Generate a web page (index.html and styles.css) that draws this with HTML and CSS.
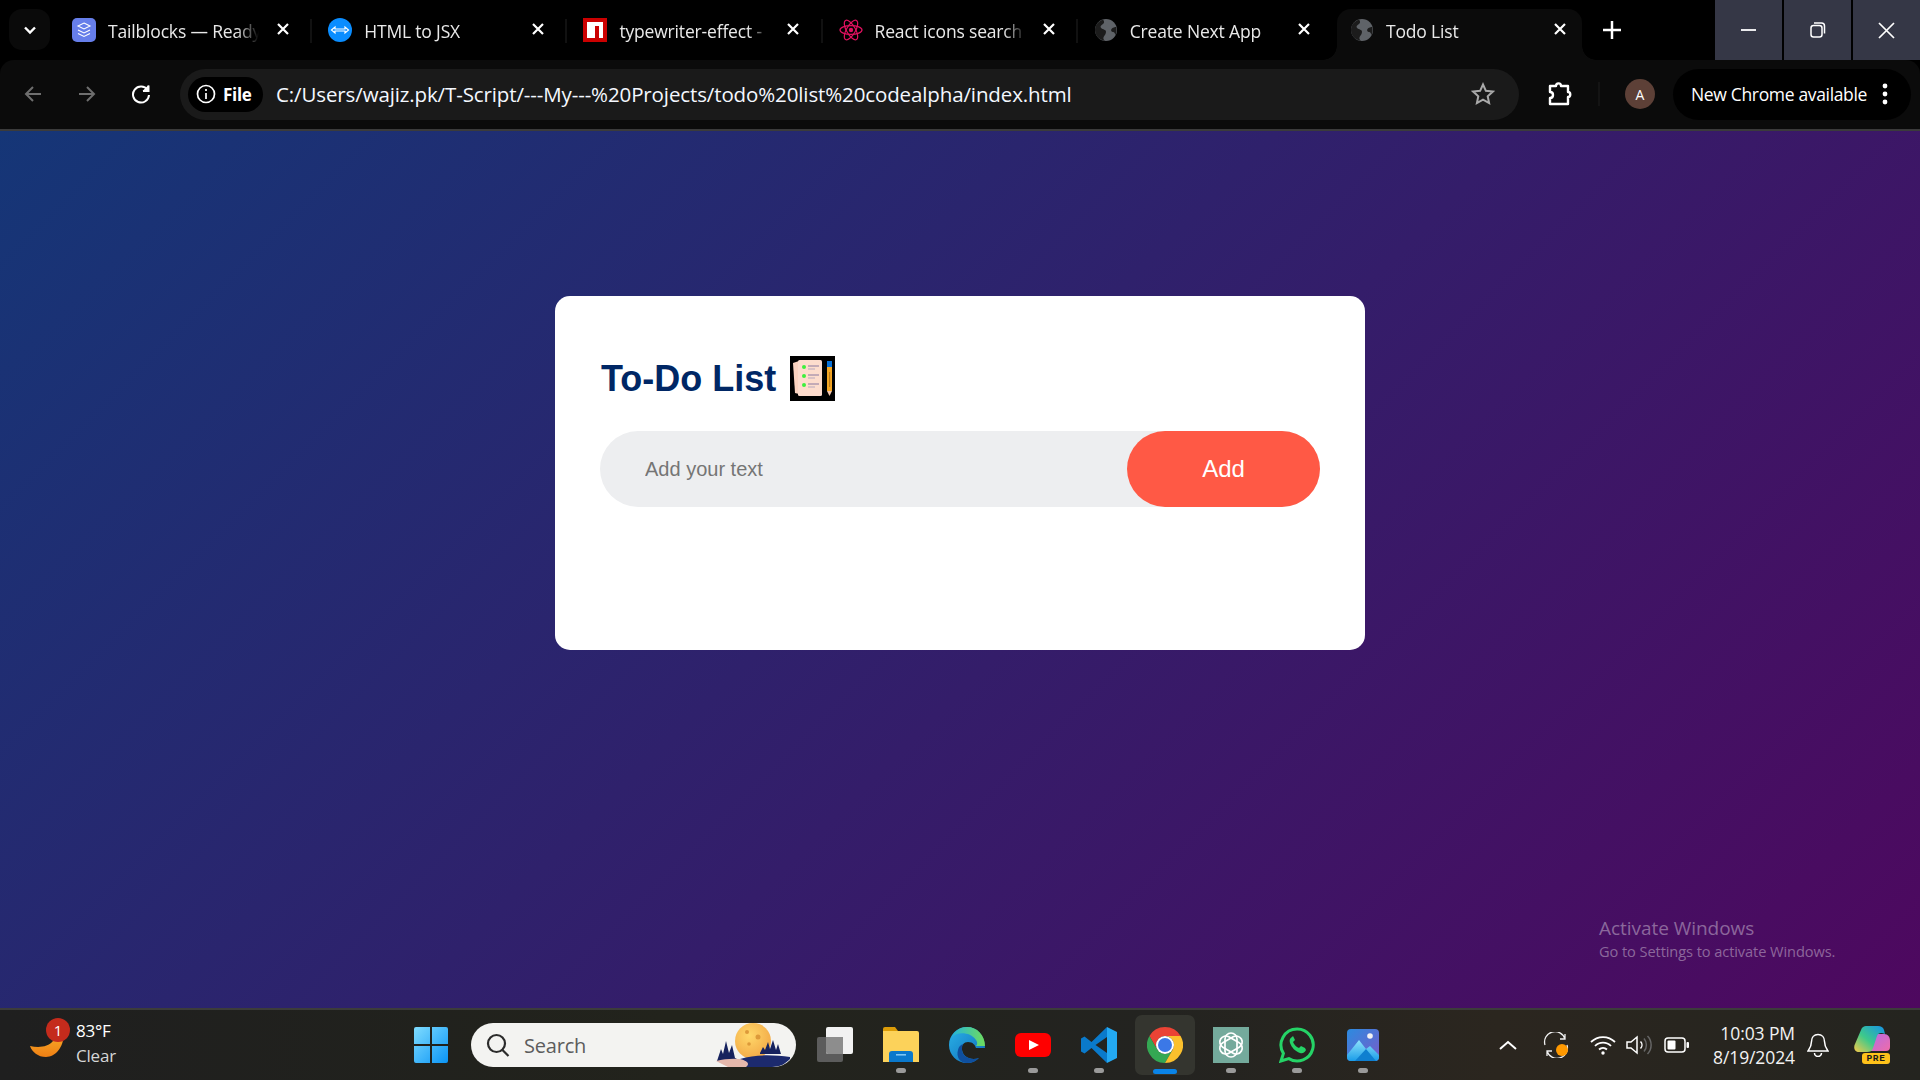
FILE: index.html
```html
<!DOCTYPE html>
<html lang="en">
<head>
<meta charset="utf-8">
<title>Todo List</title>
<link rel="stylesheet" href="styles.css">
</head>
<body>
<header class="tabstrip">
  <div class="expander"><svg width="16" height="16" viewBox="0 0 16 16"><path d="M3 5.5l5 5 5-5" fill="none" stroke="#fff" stroke-width="2.4"/></svg></div>
  <div class="tabs">
    <div class="tab">
      <svg class="fav" viewBox="0 0 24 24"><rect width="24" height="24" rx="5" fill="#667eea"/><path d="M12 5l6 3-6 3-6-3z" fill="none" stroke="#fff" stroke-width="1.1"/><path d="M6 12l6 3 6-3M6 15.5l6 3 6-3" fill="none" stroke="#fff" stroke-width="1.1"/></svg>
      <span class="tab-title">Tailblocks — Ready</span>
      <svg class="x" viewBox="0 0 12 12"><path d="M1 1l10 10M11 1L1 11"/></svg>
    </div>
    <div class="tab sep">
      <svg class="fav" viewBox="0 0 24 24"><circle cx="12" cy="12" r="12" fill="#0a8dff"/><path d="M3.5 12l3.5-3v2h10V9l3.5 3-3.5 3v-2H7v2z" fill="#0a8dff" stroke="#fff" stroke-width="1.2"/></svg>
      <span class="tab-title">HTML to JSX</span>
      <svg class="x" viewBox="0 0 12 12"><path d="M1 1l10 10M11 1L1 11"/></svg>
    </div>
    <div class="tab sep">
      <svg class="fav" viewBox="0 0 24 24"><rect width="24" height="24" fill="#cb0000"/><path d="M4 4h16v16h-4V8h-4v12H4z" fill="#fff"/></svg>
      <span class="tab-title">typewriter-effect -</span>
      <svg class="x" viewBox="0 0 12 12"><path d="M1 1l10 10M11 1L1 11"/></svg>
    </div>
    <div class="tab sep">
      <svg class="fav" viewBox="0 0 24 24" fill="none" stroke="#e0115f" stroke-width="1.2"><ellipse cx="12" cy="12" rx="11" ry="4.4"/><ellipse cx="12" cy="12" rx="11" ry="4.4" transform="rotate(60 12 12)"/><ellipse cx="12" cy="12" rx="11" ry="4.4" transform="rotate(120 12 12)"/><circle cx="12" cy="12" r="2.2" fill="#e0115f" stroke="none"/></svg>
      <span class="tab-title">React icons search</span>
      <svg class="x" viewBox="0 0 12 12"><path d="M1 1l10 10M11 1L1 11"/></svg>
    </div>
    <div class="tab sep">
      <svg class="fav" viewBox="0 0 24 24"><circle cx="12" cy="12" r="11" fill="#5f6368"/><path d="M9 1.8c2 2 1 4-1 5s-2 3 0 4 4 1 4 3-1 3-2 4.500-1 3 1 4.500C5 22 1 17.500 1 12 1 7 4.500 3 9 1.800zM22.500 9c-1.500 0-4 .5-5 2s0 3 1.500 3 2.500 2 2 3.500c1-1.700 1.500-3.500 1.500-5.500 0-1-.1-2-.3-3z" fill="#1c1c1c"/></svg>
      <span class="tab-title">Create Next App</span>
      <svg class="x" viewBox="0 0 12 12"><path d="M1 1l10 10M11 1L1 11"/></svg>
    </div>
    <div class="tab active">
      <svg class="fav" viewBox="0 0 24 24"><circle cx="12" cy="12" r="11" fill="#5f6368"/><path d="M9 1.8c2 2 1 4-1 5s-2 3 0 4 4 1 4 3-1 3-2 4.500-1 3 1 4.500C5 22 1 17.500 1 12 1 7 4.500 3 9 1.800zM22.500 9c-1.500 0-4 .5-5 2s0 3 1.500 3 2.500 2 2 3.500c1-1.700 1.500-3.500 1.500-5.500 0-1-.1-2-.3-3z" fill="#1c1c1c"/></svg>
      <span class="tab-title">Todo List</span>
      <svg class="x" viewBox="0 0 12 12"><path d="M1 1l10 10M11 1L1 11"/></svg>
    </div>
  </div>
  <svg class="newtab" viewBox="0 0 16 16"><path d="M8 0v16M0 8h16" fill="none" stroke="#fff" stroke-width="2.2"/></svg>
  <div class="winctl">
    <div class="winbtn"><svg width="16" height="16" viewBox="0 0 16 16"><path d="M0 8h15" stroke="#fff" stroke-width="1.8"/></svg></div>
    <div class="winbtn"><svg width="16" height="16" viewBox="0 0 16 16" fill="none" stroke="#fff" stroke-width="1.5"><rect x="1" y="3.500" width="11" height="11.500" rx="2.500"/><path d="M4 1h7.500A3 3 0 0 1 14.500 4v7.500"/></svg></div>
    <div class="winbtn"><svg width="17" height="17" viewBox="0 0 17 17"><path d="M1 1l15 15M16 1L1 16" stroke="#fff" stroke-width="1.700"/></svg></div>
  </div>
</header>

<nav class="toolbar">
  <svg class="nav-ic back" viewBox="0 0 20 20" fill="none" stroke="#6e6e6e" stroke-width="2"><path d="M18 10H3M10 3l-7 7 7 7"/></svg>
  <svg class="nav-ic fwd" viewBox="0 0 20 20" fill="none" stroke="#6e6e6e" stroke-width="2"><path d="M2 10h15M10 3l7 7-7 7"/></svg>
  <svg class="nav-ic reload" viewBox="0 0 20 20" fill="none" stroke="#fff" stroke-width="2"><path d="M16.600 6A8 8 0 1 0 18 11"/><path d="M17.500 1v6h-6" fill="#fff" stroke="none"/><path d="M17.500 1.500v5.500H12"/></svg>
  <div class="omnibox">
    <div class="chip">
      <svg width="20" height="20" viewBox="0 0 20 20" fill="none" stroke="#fff" stroke-width="1.700"><circle cx="10" cy="10" r="8.500"/><path d="M10 9v6M10 5v2"/></svg>
      <span class="chip-label">File</span>
    </div>
    <span class="url">C:/Users/wajiz.pk/T-Script/---My---%20Projects/todo%20list%20codealpha/index.html</span>
    <svg class="star" viewBox="0 0 24 24"><path d="M12 2.500l2.900 6.300 6.900.8-5.100 4.700 1.400 6.800-6.100-3.400-6.100 3.400 1.400-6.800L2.200 9.600l6.900-.8z" fill="none" stroke="#a9a9a9" stroke-width="2"/></svg>
  </div>
  <svg class="puzzle" viewBox="0 0 26 26" fill="none" stroke="#fff" stroke-width="2.400" stroke-linejoin="round"><path d="M3 5h6c0-3.500 5-3.500 5 0h7v6c3 0 3 5 0 5v7H3v-6c2 0 3-1.500 3-3s-1-3-3-3z"/></svg>
  <div class="tb-divider"></div>
  <div class="avatar">A</div>
  <div class="update">
    <span>New Chrome available</span>
    <svg width="6" height="22" viewBox="0 0 6 22"><circle cx="3" cy="3" r="2.400" fill="#fff"/><circle cx="3" cy="11" r="2.400" fill="#fff"/><circle cx="3" cy="19" r="2.400" fill="#fff"/></svg>
  </div>
</nav>
<div class="chrome-line"></div>

<main class="page">
  <section class="card">
    <h2 class="title">To-Do List
      <svg class="title-ic" viewBox="0 0 45 45">
        <rect width="45" height="45"/>
        <path d="M3 7l6-2v33l-4-1z" fill="#fbd3c0"/>
        <rect x="8" y="4" width="24" height="36" rx="1.500" fill="#fddccd"/>
        <g fill="#3df03d"><circle cx="14" cy="11" r="2"/><circle cx="14" cy="20" r="2"/><circle cx="14" cy="29" r="2"/></g>
        <g stroke="#8a78a0" stroke-width="1"><path d="M18 10h11M18 19h11M18 28h11"/></g>
        <g stroke="#b7a8bd" stroke-width="1"><path d="M18 13h7M18 22h7M18 31h7"/></g>
        <rect x="37" y="5" width="5" height="6" fill="#0a72d8"/>
        <rect x="37" y="11" width="5" height="24" fill="#f5a623"/>
        <rect x="39" y="16" width="1.200" height="15" fill="#b8791c"/>
        <path d="M37 35h5l-2.500 5z" fill="#f7c9b0"/>
      </svg>
    </h2>
    <div class="add-row">
      <input class="add-input" type="text" placeholder="Add your text">
      <button class="add-btn">Add</button>
    </div>
  </section>
  <aside class="activate">
    <div class="act-1">Activate Windows</div>
    <div class="act-2">Go to Settings to activate Windows.</div>
  </aside>
</main>

<footer class="taskbar">
  <div class="weather">
    <div class="moon">
      <svg width="34" height="28" viewBox="0 0 34 28"><defs><linearGradient id="wm" x1="0" y1="0" x2="0" y2="1"><stop offset="0" stop-color="#f9b42c"/><stop offset="1" stop-color="#ef7f14"/></linearGradient></defs><path d="M34 0c1 16-7 28-18 28C8 28 2 23 0 17c9 2 18 1 23-5 3-4 6-9 11-12z" fill="url(#wm)"/></svg>
      <span class="badge">1</span>
    </div>
    <div class="w-text"><div class="w-temp">83°F</div><div class="w-cond">Clear</div></div>
  </div>
  <div class="winlogo">
    <svg width="36" height="36" viewBox="0 0 36 36"><defs><linearGradient id="wl" x1="0" y1="0" x2="1" y2="1"><stop offset="0" stop-color="#7fdcff"/><stop offset="1" stop-color="#0a94f5"/></linearGradient></defs><path d="M1 2a2 2 0 0 1 2-2h14v17H1zM19 0h14a2 2 0 0 1 2 2v15H19zM1 19h16v17H3a2 2 0 0 1-2-2zM19 19h16v15a2 2 0 0 1-2 2H19z" fill="url(#wl)"/></svg>
  </div>
  <div class="search">
    <svg width="26" height="26" viewBox="0 0 26 26" fill="none" stroke="#2b2b2b" stroke-width="2.200"><circle cx="11.500" cy="11.500" r="8.500"/><path d="M17.500 18l6 6"/></svg>
    <span class="search-label">Search</span>
    <svg class="search-art" width="74" height="44" viewBox="0 0 74 44">
      <defs><radialGradient id="mn" cx=".4" cy=".35" r=".8"><stop offset="0" stop-color="#ffd86a"/><stop offset="1" stop-color="#f0a040"/></radialGradient></defs>
      <circle cx="37" cy="18" r="18" fill="url(#mn)"/>
      <g fill="#dd9a3a"><circle cx="31" cy="9" r="2"/><circle cx="42" cy="14" r="2.500"/><circle cx="33" cy="21" r="1.800"/></g>
      <path d="M1 38l4-12 2 5 3-13 3 12 3-8 3 13 6 3H1z" fill="#16225e"/>
      <path d="M44 30l3-6 2 3 3-8 2 7 3-9 3 10 2-6 3 10H44z" fill="#16225e"/>
      <path d="M0 38c12-3 24-3 36 0v6H12z" fill="#e5b8ac"/>
      <path d="M24 36c16-5 34-4 50-2v2c-5 5-10 8-18 8H30c4-3 2-6-6-8z" fill="#1c2a6e"/>
    </svg>
  </div>
  <div class="apps">
    <div class="app">
      <svg width="36" height="36" viewBox="0 0 36 36"><rect x="0" y="10" width="26" height="25" rx="2" fill="#5c5c5c"/><rect x="9" y="0" width="27" height="27" rx="2" fill="#f2f2f2"/><path d="M9 10h17v17H11a2 2 0 0 1-2-2z" fill="#8d8d8d"/></svg>
    </div>
    <div class="app">
      <svg width="36" height="36" viewBox="0 0 36 36"><path d="M0 2a2 2 0 0 1 2-2h10l3 4h-15z" fill="#dc9c08"/><path d="M0 4h34a2 2 0 0 1 2 2v29H0z" fill="#fcd25a"/><path d="M6 35V27a3 3 0 0 1 3-3h18a3 3 0 0 1 3 3v8z" fill="#0a78cc"/><rect x="13" y="27" width="10" height="1.600" fill="#7cc6f5"/></svg>
      <i class="dot"></i>
    </div>
    <div class="app">
      <svg width="36" height="36" viewBox="0 0 36 36"><defs><linearGradient id="e1" x1="0" y1="0" x2="1" y2="1"><stop offset="0" stop-color="#2bb3e8"/><stop offset="1" stop-color="#0d6ab8"/></linearGradient><linearGradient id="e2" x1="0" y1="0" x2="1" y2="0"><stop offset="0" stop-color="#25b6d8"/><stop offset="1" stop-color="#6fdc5c"/></linearGradient></defs><path d="M18 0C8 0 0 8 0 18s8 18 18 18c5 0 9-2 12-5-8 3-16-1-17-8-1-5 2-8 6-8 5 0 7 3 8 6h9C36 8 28 0 18 0z" fill="url(#e1)"/><path d="M18 0C10 0 5 5 3 10c4-5 18-6 24 3 2 3 1 5 0 6h9C36 8 28 0 18 0z" fill="url(#e2)"/><path d="M13 23c1 7 9 11 17 8-3 3-7 5-12 5-7 0-11-6-9-13 1-4 3-5 5-6-1 2-1 4-1 6z" fill="#0f4f9e"/></svg>
    </div>
    <div class="app">
      <svg width="36" height="24" viewBox="0 0 36 24"><rect width="36" height="24" rx="6" fill="#f00"/><path d="M14 7l10 5-10 5z" fill="#fff"/></svg>
      <i class="dot"></i>
    </div>
    <div class="app">
      <svg width="36" height="36" viewBox="0 0 36 36"><path d="M26 0l10 5v26l-10 5z" fill="#23a9f2"/><path d="M26 0L10.500 15 3.500 9.500 0 11.500v13l3.500 2 7-5.500L26 36V26L14.500 18 26 10z" fill="#0a7acb"/></svg>
      <i class="dot"></i>
    </div>
    <div class="app app-active">
      <svg width="36" height="36" viewBox="0 0 36 36"><path d="M18 0a18 18 0 0 1 15.590 9H18a9 9 0 0 0-7.790 13.500L2.410 9A18 18 0 0 1 18 0z" fill="#ea4335"/><path d="M2.410 9l7.800 13.500a9 9 0 0 0 15.580 0L18 36A18 18 0 0 1 2.410 9z" fill="#34a853"/><path d="M33.590 9H18a9 9 0 0 1 7.790 13.500L18 36A18 18 0 0 0 33.590 9z" fill="#fbc02d"/><circle cx="18" cy="18" r="9" fill="#fff"/><circle cx="18" cy="18" r="7" fill="#3b78e7"/></svg>
      <i class="bar"></i>
    </div>
    <div class="app">
      <svg width="36" height="36" viewBox="0 0 36 36"><rect width="36" height="36" fill="#74aa9c"/><g fill="none" stroke="#fff" stroke-width="1.700"><rect x="12" y="6" width="12" height="24" rx="6"/><rect x="12" y="6" width="12" height="24" rx="6" transform="rotate(60 18 18)"/><rect x="12" y="6" width="12" height="24" rx="6" transform="rotate(120 18 18)"/></g></svg>
      <i class="dot"></i>
    </div>
    <div class="app">
      <svg width="36" height="36" viewBox="0 0 36 36"><path d="M18 2a16 16 0 0 0-13.600 24.400L2 34l7.800-2.400A16 16 0 1 0 18 2z" fill="none" stroke="#25d366" stroke-width="3"/><path d="M13 10c-2 1-3 3-2 6 2 5 5 8 10 10 3 1 5-1 6-3l-1-2-4-2-2 2c-3-1-5-4-6-6l2-2-2-4z" fill="#25d366"/></svg>
      <i class="dot"></i>
    </div>
    <div class="app">
      <svg width="32" height="36" viewBox="0 0 32 36"><defs><linearGradient id="ph" x1="0" y1="0" x2="1" y2="1"><stop offset="0" stop-color="#2b8be0"/><stop offset="1" stop-color="#7a5bc8"/></linearGradient><linearGradient id="ph2" x1="0" y1="0" x2="0" y2="1"><stop offset="0" stop-color="#8fe3fb"/><stop offset="1" stop-color="#1a9ce8"/></linearGradient></defs><rect y="2" width="32" height="32" rx="4" fill="url(#ph)"/><circle cx="23" cy="9" r="2.800" fill="#f3f3f3"/><path d="M0 28l12-15 7 9 4-3 9 9v2a4 4 0 0 1-4 4H4a4 4 0 0 1-4-4z" fill="url(#ph2)"/><path d="M8 34l11-12 10 12z" fill="#0f7fd0"/></svg>
      <i class="dot"></i>
    </div>
  </div>
  <div class="tray">
    <svg class="t-chev" width="18" height="10" viewBox="0 0 18 10"><path d="M1 9l8-7 8 7" fill="none" stroke="#fff" stroke-width="2"/></svg>
    <div class="t-sync">
      <svg width="26" height="26" viewBox="0 0 26 26" fill="none" stroke="#f0f0f0" stroke-width="1.300"><path d="M2 13A10 10 0 0 1 22 7M22 2v5h-5M24 13a10 10 0 0 1-20 6M4 24v-5h5"/><circle cx="19" cy="18" r="6" fill="#f90" stroke="none"/></svg>
    </div>
    <svg class="t-wifi" width="26" height="20" viewBox="0 0 26 20" fill="none" stroke="#fff" stroke-width="1.800"><path d="M1 7a17 17 0 0 1 24 0M5 11a11 11 0 0 1 16 0M9 14.500a6 6 0 0 1 8 0"/><circle cx="13" cy="18" r="1.700" fill="#fff" stroke="none"/></svg>
    <svg class="t-vol" width="26" height="22" viewBox="0 0 26 22" fill="none" stroke="#fff" stroke-width="1.500"><path d="M1 8h4l6-5v16l-6-5H1z"/><path d="M14.500 7.500a5 5 0 0 1 0 7"/><path d="M18 4.500a10 10 0 0 1 0 13M21.500 2a13 13 0 0 1 0 18" stroke="#666"/></svg>
    <svg class="t-bat" width="26" height="16" viewBox="0 0 26 16"><rect x="1" y="1" width="20" height="14" rx="3" fill="none" stroke="#fff" stroke-width="1.500"/><rect x="3.500" y="3.500" width="8" height="9" rx="1" fill="#fff"/><rect x="22.500" y="5" width="2.500" height="6" rx="1" fill="#fff"/></svg>
    <div class="clock"><div>10:03 PM</div><div>8/19/2024</div></div>
    <svg class="t-bell" width="22" height="24" viewBox="0 0 22 24" fill="none" stroke="#fff" stroke-width="1.500"><path d="M11 1.500c-4 0-6.500 3-6.500 7 0 5-2.500 8-3.500 9.500h20c-1-1.500-3.500-4.500-3.500-9.500 0-4-2.500-7-6.500-7z"/><path d="M7.500 20a3.500 3.500 0 0 0 7 0"/></svg>
    <div class="copilot">
      <svg width="36" height="28" viewBox="0 0 36 28"><defs><linearGradient id="c1" x1="0" y1="1" x2="1" y2="0"><stop offset="0" stop-color="#f7c948"/><stop offset=".45" stop-color="#3ec98a"/><stop offset="1" stop-color="#1591e8"/></linearGradient><linearGradient id="c2" x1="0" y1="0" x2="1" y2="1"><stop offset="0" stop-color="#b56be6"/><stop offset="1" stop-color="#ef6ca8"/></linearGradient></defs><path d="M20 8h10c4 0 6 3 6 7v6a4 4 0 0 1-4 4H16z" fill="url(#c2)"/><path d="M12 0h12c3 0 5 1 6 4l1 4c-4-2-7-1-8 2l-4 12c-1 3-3 4-6 4H5c-4 0-6-4-4-8L7 4c1-3 3-4 5-4z" fill="url(#c1)"/></svg>
      <span class="pre">PRE</span>
    </div>
  </div>
</footer>
</body>
</html>
```
FILE: styles.css
```css
* { box-sizing: border-box; }
html, body { margin: 0; padding: 0; }
body {
  width: 1920px;
  height: 1080px;
  overflow: hidden;
  display: flex;
  flex-direction: column;
  background: #000;
  color: #fff;
  font-family: "Open Sans", "Noto Sans", sans-serif;
}

/* Tab strip */
.tabstrip {
  height: 60px;
  flex: none;
  display: flex;
  background: #000;
}
.expander {
  width: 41px;
  height: 41px;
  margin: 9px 4px 0 9px;
  border-radius: 13px;
  background: #0a0a0a;
  display: flex;
  align-items: center;
  justify-content: center;
}
.tabs { display: flex; }
.tab {
  position: relative;
  width: 255.2px;
  height: 60px;
  padding-left: 18px;
  display: flex;
  align-items: center;
  font-size: 17.5px;
  letter-spacing: -0.17px;
  color: #e9e9e9;
}
.tab.sep { padding-left: 19px; }
.tab.sep .x { margin-left: 17px; }
.tab.sep::before {
  content: "";
  position: absolute;
  left: 1px;
  top: 19px;
  width: 2px;
  height: 24px;
  background: #111;
}
.fav { width: 24px; height: 24px; flex: none; margin-right: 12px; }
.tab-title {
  width: 151px;
  flex: none;
  white-space: nowrap;
  overflow: hidden;
  -webkit-mask-image: linear-gradient(to right, #000 85%, transparent);
  mask-image: linear-gradient(to right, #000 85%, transparent);
  position: relative;
  top: 1px;
}
.x {
  width: 12px;
  height: 12px;
  flex: none;
  margin-left: 18px;
  margin-top: -2px;
}
.x path { fill: none; stroke: #fff; stroke-width: 2.2; }
.tab.active {
  width: 245px;
  margin-left: 7px;
  padding-left: 13px;
  margin-top: 9px;
  height: 51px;
  background: #0b0b0b;
  border-radius: 14px 14px 0 0;
}
.tab.active .x { margin-left: 17px; margin-top: -11px; }
.tab.active .fav { margin-top: -9px; }
.tab.active .tab-title { margin-top: -9px; }
.tab.active::before,
.tab.active::after {
  content: "";
  position: absolute;
  bottom: 0;
  width: 14px;
  height: 14px;
}
.tab.active::before {
  left: -14px;
  background: radial-gradient(circle at 0 0, transparent 13.5px, #0b0b0b 14px);
}
.tab.active::after {
  right: -14px;
  background: radial-gradient(circle at 100% 0, transparent 13.5px, #0b0b0b 14px);
}
.newtab { width: 18px; height: 18px; margin: 21px 0 0 21px; flex: none; }
.winctl { margin-left: auto; display: flex; gap: 2px; }
.winbtn {
  width: 67px;
  height: 60px;
  background: #353746;
  display: flex;
  align-items: center;
  justify-content: center;
}

/* Toolbar */
.toolbar {
  height: 69px;
  flex: none;
  display: flex;
  align-items: center;
  background: #0b0b0b;
  border-radius: 14px 14px 0 0;
  padding-left: 23px;
  padding-bottom: 1px;
}
.nav-ic { width: 20px; height: 20px; flex: none; }
.fwd { margin-left: 34px; }
.reload { margin-left: 34px; }
.omnibox {
  width: 1339px;
  height: 51px;
  margin-left: 29px;
  border-radius: 26px;
  background: #1a1a1a;
  display: flex;
  align-items: center;
  padding-left: 8px;
}
.chip {
  width: 75px;
  height: 35px;
  border-radius: 18px;
  background: #000;
  display: flex;
  align-items: center;
  padding-left: 8px;
  gap: 7px;
  flex: none;
}
.chip-label { font-size: 17px; font-weight: 700; letter-spacing: -0.3px; }
.url {
  margin-left: 13px;
  font-size: 20.5px;
  letter-spacing: -0.12px;
  white-space: nowrap;
  color: #f4f8ff;
}
.star { width: 24px; height: 24px; margin-left: auto; margin-right: 24px; flex: none; }
.puzzle { width: 26px; height: 26px; margin-left: 28px; flex: none; }
.tb-divider { width: 2px; height: 24px; background: #141414; margin-left: 25px; flex: none; }
.avatar {
  width: 30px;
  height: 30px;
  margin-left: 25px;
  border-radius: 50%;
  background: #5d4037;
  color: #fff;
  font-size: 14px;
  display: flex;
  align-items: center;
  justify-content: center;
  flex: none;
}
.update {
  width: 238px;
  height: 51px;
  margin-left: 18px;
  border-radius: 26px;
  background: #000;
  display: flex;
  align-items: center;
  padding-left: 18px;
  font-size: 17.5px;
  letter-spacing: -0.34px;
  white-space: nowrap;
  gap: 15px;
  flex: none;
}
.chrome-line { height: 2px; flex: none; background: #3b3b3b; }

/* Page */
.page {
  position: relative;
  height: 877px;
  flex: none;
  background: linear-gradient(135deg, #153677, #4e085f);
  padding-top: 165px;
  overflow: hidden;
}
.card {
  width: 810px;
  height: 354px;
  margin: 0 auto;
  padding: 60px 45px 0;
  background: #fff;
  border-radius: 15px;
  font-family: "Liberation Sans", Arial, sans-serif;
}
.title {
  margin: 0 0 30px;
  height: 45px;
  padding-left: 1px;
  display: flex;
  align-items: center;
  gap: 14px;
  font-size: 36px;
  font-weight: 700;
  color: #002765;
}
.title-ic { width: 45px; height: 45px; flex: none; }
.add-row {
  height: 76px;
  display: flex;
  align-items: stretch;
  border-radius: 45px;
  background: #edeef0;
}
.add-input {
  flex: 1;
  min-width: 0;
  border: 0;
  outline: 0;
  background: transparent;
  padding: 0 45px;
  font: 20px "Liberation Sans", Arial, sans-serif;
  color: #000;
}
.add-input::placeholder { color: #757575; opacity: 1; }
.add-btn {
  width: 193px;
  border: 0;
  border-radius: 45px;
  background: #ff5945;
  color: #fff;
  font: 24px "Liberation Sans", Arial, sans-serif;
}
.activate {
  position: absolute;
  left: 1599px;
  top: 784px;
  color: rgba(255, 255, 255, 0.38);
}
.act-1 { font-size: 19px; line-height: 26px; letter-spacing: -0.04px; }
.act-2 { font-size: 14.6px; line-height: 20px; letter-spacing: -0.08px; }

/* Taskbar */
.taskbar {
  height: 72px;
  flex: none;
  display: flex;
  align-items: center;
  border-top: 2px solid #3c3c3a;
  background: linear-gradient(90deg, #1f1f1f 0%, #22231c 35%, #232320 60%, #2b261f 78%, #24241f 100%);
  padding-left: 30px;
}
.weather { width: 348px; display: flex; align-items: center; flex: none; }
.moon { position: relative; width: 46px; height: 40px; flex: none; padding-top: 4px; }
.badge {
  position: absolute;
  left: 16px;
  top: -7px;
  width: 24px;
  height: 24px;
  border-radius: 50%;
  background: #c42b1c;
  color: #fff;
  font-size: 15px;
  line-height: 24px;
  text-align: center;
}
.w-text { font-size: 17px; line-height: 25px; letter-spacing: -0.2px; margin-top: -4px; }
.w-temp { color: #fff; }
.w-cond { color: #d6d6d6; }
.winlogo { padding-left: 35px; flex: none; display: flex; }
.search {
  position: relative;
  width: 325px;
  height: 44px;
  margin-left: 22px;
  border-radius: 22px;
  background: #f3f3f1;
  display: flex;
  align-items: center;
  padding-left: 14px;
  overflow: hidden;
  flex: none;
}
.search-label { margin-left: 13px; color: #5c5c5c; font-size: 20px; letter-spacing: -0.2px; }
.search-art { position: absolute; right: 6px; top: 0; }
.apps { display: flex; gap: 6px; margin-left: 9px; flex: none; }
.app {
  position: relative;
  width: 60px;
  height: 60px;
  border-radius: 7px;
  display: flex;
  align-items: center;
  justify-content: center;
}
.app-active { background: #34352f; }
.dot {
  position: absolute;
  left: 25px;
  bottom: 2px;
  width: 10px;
  height: 5px;
  border-radius: 3px;
  background: #9a9a9a;
}
.bar {
  position: absolute;
  left: 18px;
  bottom: 1px;
  width: 24px;
  height: 5px;
  border-radius: 3px;
  background: #0a84e8;
}
.tray {
  margin-left: auto;
  padding-right: 30px;
  display: flex;
  align-items: center;
  flex: none;
}
.t-sync { margin-left: 26px; display: flex; }
.t-wifi { margin-left: 21px; }
.t-vol { margin-left: 10px; }
.t-bat { margin-left: 12px; }
.clock {
  margin-left: 10px;
  width: 95px;
  text-align: right;
  font-size: 17.5px;
  line-height: 24px;
  letter-spacing: -0.1px;
  color: #f2f2f2;
  white-space: nowrap;
}
.t-bell { margin-left: 12px; }
.copilot { position: relative; width: 36px; height: 38px; margin-left: 25px; flex: none; }
.pre {
  position: absolute;
  left: 8px;
  bottom: 0;
  width: 28px;
  height: 11px;
  border-radius: 3px;
  background: #ffc21a;
  color: #1a1a1a;
  font-size: 9.5px;
  font-weight: 700;
  line-height: 11px;
  letter-spacing: 0.6px;
  text-align: center;
  font-family: "Liberation Mono", monospace;
}
```
